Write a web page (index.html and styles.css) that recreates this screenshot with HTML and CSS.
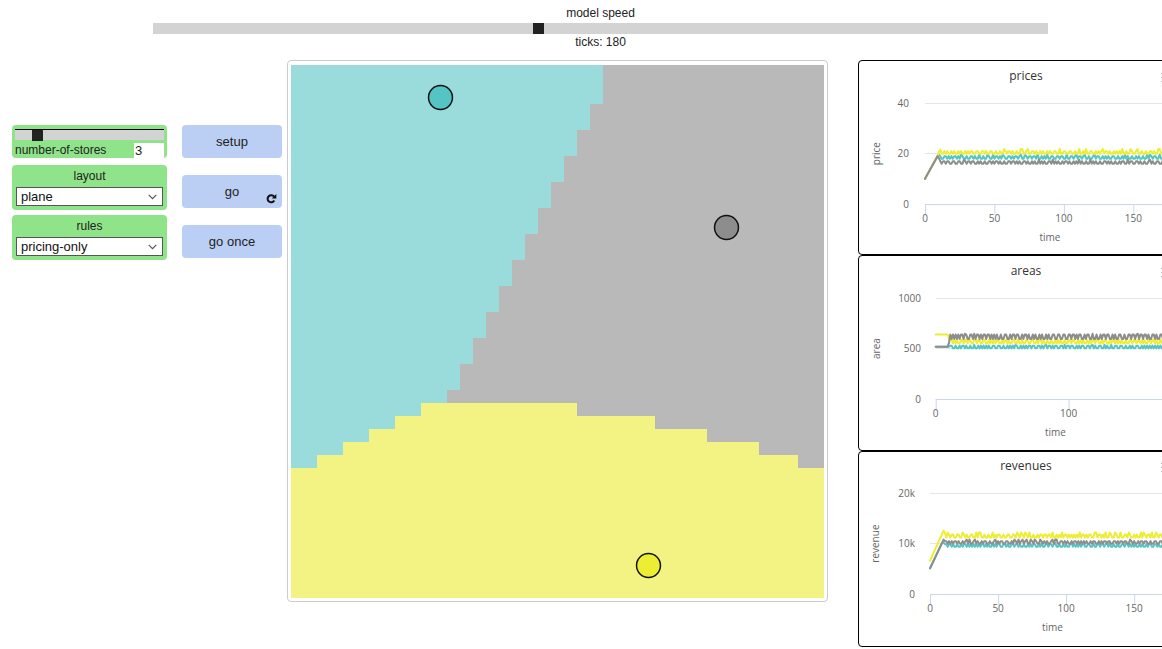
FILE: index.html
```html
<!DOCTYPE html>
<html>
<head>
<meta charset="utf-8">
<title>Stores model</title>
<link rel="stylesheet" href="styles.css">
</head>
<body>
<div class="speed">
  <div class="speed-label">model speed</div>
  <div class="speed-track"><div class="speed-thumb"></div></div>
  <div class="ticks">ticks: 180</div>
</div>
<div class="main">
  <div class="controls">
    <div class="inputs">
      <div class="slider">
        <div class="slider-track"><div class="slider-thumb"></div></div>
        <div class="slider-row"><span class="slider-name">number-of-stores</span><span class="slider-value">3</span></div>
      </div>
      <div class="chooser chooser-first">
        <div class="chooser-name">layout</div>
        <div class="select"><span>plane</span><svg class="chev" width="9" height="6" viewBox="0 0 9 6"><polyline points="0.7,0.8 4.5,4.6 8.3,0.8"/></svg></div>
      </div>
      <div class="chooser chooser-second">
        <div class="chooser-name">rules</div>
        <div class="select"><span>pricing-only</span><svg class="chev" width="9" height="6" viewBox="0 0 9 6"><polyline points="0.7,0.8 4.5,4.6 8.3,0.8"/></svg></div>
      </div>
    </div>
    <div class="buttons">
      <div class="btn">setup</div>
      <div class="btn btn-go">go<svg class="forever" width="11" height="11" viewBox="0 0 11 11"><path class="forever-arc" d="M8.1,3.6 A3.6,3.6 0 1 0 8.3,7.6"/><polygon class="forever-head" points="10.3,0.9 10.3,5.4 5.8,5.4"/></svg></div>
      <div class="btn">go once</div>
    </div>
  </div>
  <div class="view">
    <svg class="world" width="533" height="533" viewBox="0 0 41 41">
      <rect class="patch-gray" x="0" y="0" width="41" height="41"/>
      <polygon class="patch-cyan" points="0,0 24,0 24,3 23,3 23,5 22,5 22,7 21,7 21,9 20,9 20,11 19,11 19,13 18,13 18,15 17,15 17,17 16,17 16,19 15,19 15,21 14,21 14,23 13,23 13,25 12,25 12,31 0,31"/>
      <polygon class="patch-yellow" points="10,26 22,26 22,27 28,27 28,28 32,28 32,29 36,29 36,30 39,30 39,31 41,31 41,41 0,41 0,31 2,31 2,30 4,30 4,29 6,29 6,28 8,28 8,27 10,27"/>
      <circle class="turtle turtle-cyan" cx="11.5" cy="2.5" r="0.92"/>
      <circle class="turtle turtle-gray" cx="33.5" cy="12.5" r="0.92"/>
      <circle class="turtle turtle-yellow" cx="27.5" cy="38.5" r="0.92"/>
    </svg>
  </div>
  <div class="plots">
    <div class="plot plot-a">
      <svg class="chart" width="334" height="193" id="chart-prices">
        <text class="ch-title" x="167" y="19">prices</text>
        <g class="ch-menu"><rect x="302" y="12" width="14" height="1"/><rect x="302" y="16" width="14" height="1"/><rect x="302" y="20" width="14" height="1"/></g>
        <line class="grid" x1="66" x2="316" y1="42.5" y2="42.5"/>
        <line class="grid" x1="66" x2="316" y1="92.5" y2="92.5"/>
        <g class="series"></g>
        <line class="axis" x1="66" x2="316" y1="143.5" y2="143.5"/>
        <line class="axis" x1="66.5" x2="66.5" y1="143.5" y2="153.5"/>
        <line class="axis" x1="135.9" x2="135.9" y1="143.5" y2="153.5"/>
        <line class="axis" x1="205.4" x2="205.4" y1="143.5" y2="153.5"/>
        <line class="axis" x1="274.8" x2="274.8" y1="143.5" y2="153.5"/>
        <text class="ch-label mid" x="66" y="161">0</text>
        <text class="ch-label mid" x="135.4" y="161">50</text>
        <text class="ch-label mid" x="204.9" y="161">100</text>
        <text class="ch-label mid" x="274.3" y="161">150</text>
        <text class="ch-label end" x="50" y="46">40</text>
        <text class="ch-label end" x="50" y="96.3">20</text>
        <text class="ch-label end" x="50" y="146.6">0</text>
        <text class="ch-axis mid" x="191" y="180">time</text>
        <text class="ch-axis mid" transform="translate(21,92.6) rotate(-90)">price</text>
      </svg>
    </div>
    <div class="plot plot-b">
      <svg class="chart" width="334" height="194" id="chart-areas">
        <text class="ch-title" x="167" y="19">areas</text>
        <g class="ch-menu"><rect x="302" y="12" width="14" height="1"/><rect x="302" y="16" width="14" height="1"/><rect x="302" y="20" width="14" height="1"/></g>
        <line class="grid" x1="76.7" x2="316" y1="42.5" y2="42.5"/>
        <line class="grid" x1="76.7" x2="316" y1="92.5" y2="92.5"/>
        <g class="series"></g>
        <line class="axis" x1="76.7" x2="316" y1="143.5" y2="143.5"/>
        <line class="axis" x1="77.2" x2="77.2" y1="143.5" y2="153.5"/>
        <line class="axis" x1="210.1" x2="210.1" y1="143.5" y2="153.5"/>
        <text class="ch-label mid" x="76.7" y="161">0</text>
        <text class="ch-label mid" x="209.6" y="161">100</text>
        <text class="ch-label end" x="62" y="46">1000</text>
        <text class="ch-label end" x="62" y="96.3">500</text>
        <text class="ch-label end" x="62" y="146.6">0</text>
        <text class="ch-axis mid" x="196.4" y="180">time</text>
        <text class="ch-axis mid" transform="translate(21,92.6) rotate(-90)">area</text>
      </svg>
    </div>
    <div class="plot plot-c">
      <svg class="chart" width="334" height="194" id="chart-revenues">
        <text class="ch-title" x="167" y="18">revenues</text>
        <g class="ch-menu"><rect x="302" y="11" width="14" height="1"/><rect x="302" y="15" width="14" height="1"/><rect x="302" y="19" width="14" height="1"/></g>
        <line class="grid" x1="71" x2="316" y1="41.5" y2="41.5"/>
        <line class="grid" x1="71" x2="316" y1="91.5" y2="91.5"/>
        <g class="series"></g>
        <line class="axis" x1="71" x2="316" y1="142.5" y2="142.5"/>
        <line class="axis" x1="71.5" x2="71.5" y1="142.5" y2="152.5"/>
        <line class="axis" x1="139.6" x2="139.6" y1="142.5" y2="152.5"/>
        <line class="axis" x1="207.6" x2="207.6" y1="142.5" y2="152.5"/>
        <line class="axis" x1="275.7" x2="275.7" y1="142.5" y2="152.5"/>
        <text class="ch-label mid" x="71" y="160">0</text>
        <text class="ch-label mid" x="139.1" y="160">50</text>
        <text class="ch-label mid" x="207.1" y="160">100</text>
        <text class="ch-label mid" x="275.2" y="160">150</text>
        <text class="ch-label end" x="56" y="45">20k</text>
        <text class="ch-label end" x="56" y="95.3">10k</text>
        <text class="ch-label end" x="56" y="145.6">0</text>
        <text class="ch-axis mid" x="193.5" y="179">time</text>
        <text class="ch-axis mid" transform="translate(20,91.6) rotate(-90)">revenue</text>
      </svg>
    </div>
  </div>
</div>
<script src="script.js"></script>
</body>
</html>
```

FILE: styles.css
```css
html, body {
  margin: 0;
  padding: 0;
  overflow: hidden;
  background: #ffffff;
}
body {
  width: 1162px;
  height: 649px;
  font-family: "Liberation Sans", Arial, sans-serif;
  color: #222222;
}

/* speed bar */
.speed {
  margin-left: 153px;
  width: 895px;
  height: 60px;
  text-align: center;
  font-size: 12px;
}
.speed-label {
  padding-top: 6px;
  line-height: 14px;
}
.speed-track {
  margin-top: 3px;
  height: 11px;
  background: #d3d3d3;
  display: flex;
}
.speed-thumb {
  width: 11px;
  height: 11px;
  margin-left: 380px;
  background: #222222;
}
.ticks {
  margin-top: 1px;
  line-height: 14px;
}

/* main row */
.main {
  display: flex;
  align-items: flex-start;
  padding-left: 12px;
}
.controls {
  display: flex;
  flex-shrink: 0;
  padding-top: 65px;
}
.inputs {
  width: 155px;
  display: flex;
  flex-direction: column;
}
.slider {
  height: 33px;
  box-sizing: border-box;
  padding: 4px 3px 0 3px;
  background: #8fe388;
  border-radius: 4px;
}
.slider-track {
  height: 11px;
  box-sizing: border-box;
  border-top: 1px solid #000000;
  background: #d3d3d3;
  display: flex;
}
.slider-thumb {
  width: 11px;
  height: 11px;
  margin-left: 17px;
  background: #222222;
}
.slider-row {
  margin-top: 3px;
  height: 15px;
  display: flex;
  justify-content: space-between;
}
.slider-name {
  font-size: 12px;
  line-height: 15px;
}
.slider-value {
  width: 29px;
  padding-left: 1px;
  background: #ffffff;
  font-size: 13px;
  line-height: 15px;
}
.chooser {
  height: 45px;
  box-sizing: border-box;
  padding: 4px 4px 0 4px;
  background: #8fe388;
  border-radius: 4px;
}
.chooser-first { margin-top: 7px; }
.chooser-second { margin-top: 5px; }
.chooser-name {
  text-align: center;
  font-size: 12px;
  line-height: 14px;
}
.select {
  margin-top: 4px;
  height: 19px;
  box-sizing: border-box;
  border: 1px solid #555555;
  background: #ffffff;
  display: flex;
  align-items: center;
  padding: 0 5px 0 4px;
  font-size: 13px;
  color: #111111;
}
.chev {
  margin-left: auto;
  display: block;
}
.chev polyline {
  fill: none;
  stroke: #555555;
  stroke-width: 1.2;
}

.buttons {
  margin-left: 15px;
  display: flex;
  flex-direction: column;
  gap: 17px;
}
.btn {
  position: relative;
  width: 100px;
  height: 33px;
  border-radius: 4px;
  background: #bacff3;
  display: flex;
  align-items: center;
  justify-content: center;
  font-size: 13px;
  color: #222222;
}
.forever {
  position: absolute;
  right: 5px;
  bottom: 4px;
}
.forever-arc {
  fill: none;
  stroke: #111111;
  stroke-width: 2;
}
.forever-head {
  fill: #111111;
}

/* world view */
.view {
  flex-shrink: 0;
  margin-left: 5px;
  border: 1px solid #cccccc;
  border-radius: 4px;
  padding: 4px 3px 3px 3px;
}
.world {
  display: block;
}
.patch-gray { fill: #b9b9b9; shape-rendering: crispEdges; }
.patch-cyan { fill: #99dcdb; shape-rendering: crispEdges; }
.patch-yellow { fill: #f3f383; shape-rendering: crispEdges; }
.turtle { stroke: #111111; stroke-width: 0.115; }
.turtle-cyan { fill: #55c4c4; }
.turtle-gray { fill: #8d8d8d; }
.turtle-yellow { fill: #eded31; }

/* plots */
.plots {
  flex-shrink: 0;
  margin-left: 30px;
  display: flex;
  flex-direction: column;
}
.plot {
  width: 336px;
  box-sizing: border-box;
  border: 1px solid #000000;
  border-radius: 4px;
  background: #ffffff;
  overflow: hidden;
}
.plot-a { height: 195px; }
.plot-b { height: 196px; }
.plot-c { height: 196px; }
.chart {
  display: block;
  font-family: "Open Sans", "DejaVu Sans", sans-serif;
}
.ch-title {
  font-size: 12px;
  fill: #333333;
  text-anchor: middle;
}
.ch-menu rect { fill: #b0b0b0; }
.ch-label {
  font-size: 10px;
  fill: #666666;
}
.ch-axis {
  font-size: 10px;
  fill: #666666;
}
.mid { text-anchor: middle; }
.end { text-anchor: end; }
.grid {
  stroke: #e6e6e6;
  stroke-width: 1;
}
.axis {
  stroke: #ccd6eb;
  stroke-width: 1;
}
.line {
  fill: none;
  stroke-width: 2;
  stroke-linejoin: round;
  stroke-linecap: round;
}
.line-yellow { stroke: #eded31; }
.line-cyan { stroke: #54c4c4; }
.line-gray { stroke: #8d8d8d; }
```

FILE: script.js
```js
(function () {
  function rng(a) {
    return function () {
      a |= 0; a = a + 0x6D2B79F5 | 0;
      var t = Math.imul(a ^ a >>> 15, 1 | a);
      t = t + Math.imul(t ^ t >>> 7, 61 | t) ^ t;
      return ((t ^ t >>> 14) >>> 0) / 4294967296;
    };
  }
  /* square-ish wave that flips every 1-2 ticks, with occasional bumps */
  function zig(seed, start, lo, hi, bumpP, bump) {
    var r = rng(seed), out = {}, state = 0, left = 1;
    for (var t = start; t <= 180; t++) {
      var v = state ? hi : lo;
      if (state && r() < bumpP) v += bump;
      out[t] = v;
      left--;
      if (left <= 0) {
        state ^= 1;
        left = r() < 0.55 ? 1 : 2;
      }
    }
    return out;
  }
  function series(pre, post, overrides) {
    var pts = [];
    for (var t = 0; t <= 180; t++) {
      var v;
      if (overrides && overrides[t] !== undefined) v = overrides[t];
      else if (t <= 9) v = pre(t);
      else v = post[t];
      pts.push([t, v]);
    }
    return pts;
  }
  var NS = "http://www.w3.org/2000/svg";
  function draw(id, x0, x1, yb, yt, vmax, list) {
    var svg = document.getElementById(id);
    if (!svg) return;
    var g = svg.querySelector(".series");
    list.forEach(function (s) {
      var p = s.pts.map(function (d) {
        var x = x0 + (x1 - x0) * d[0] / 180;
        var y = yb - (yb - yt) * d[1] / vmax;
        return x.toFixed(2) + "," + y.toFixed(2);
      }).join(" ");
      var pl = document.createElementNS(NS, "polyline");
      pl.setAttribute("points", p);
      pl.setAttribute("class", "line line-" + s.c);
      g.appendChild(pl);
    });
  }

  var ramp = function (t) { return 10 + t; };
  draw("chart-prices", 66, 316, 143, 42.3, 40, [
    { c: "cyan", pts: series(ramp, zig(11, 10, 18.0, 19.0, 0.15, 0.6), { 10: 19.6 }) },
    { c: "yellow", pts: series(ramp, zig(23, 10, 20.0, 21.0, 0.2, 0.8), { 10: 20.6, 11: 21.6 }) },
    { c: "gray", pts: series(ramp, zig(37, 10, 16.0, 17.0, 0.15, 0.6), { 10: 18.2 }) }
  ]);

  draw("chart-areas", 76.7, 316, 143, 42.3, 1000, [
    { c: "cyan", pts: series(function () { return 520; }, zig(5, 10, 503, 530, 0.1, 8), { 10: 520 }) },
    { c: "yellow", pts: series(function () { return 641; }, zig(17, 10, 553, 585, 0.1, 8), { 10: 600 }) },
    { c: "gray", pts: series(function () { return 520; }, zig(29, 10, 595, 640, 0.1, 8), { 10: 560 }) }
  ]);

  draw("chart-revenues", 71, 316, 142, 41.3, 20000, [
    { c: "cyan", pts: series(function (t) { return 5100 + 570 * t; }, zig(41, 10, 9400, 9900, 0.15, 250), { 10: 10200 }) },
    { c: "yellow", pts: series(function (t) { return 6600 + 600 * t; }, zig(53, 10, 11200, 11800, 0.2, 400), { 10: 12600, 11: 12100 }) },
    { c: "gray", pts: series(function (t) { return 5100 + 570 * t; }, zig(67, 10, 10000, 10500, 0.15, 300), { 10: 10800 }) }
  ]);
})();
```
